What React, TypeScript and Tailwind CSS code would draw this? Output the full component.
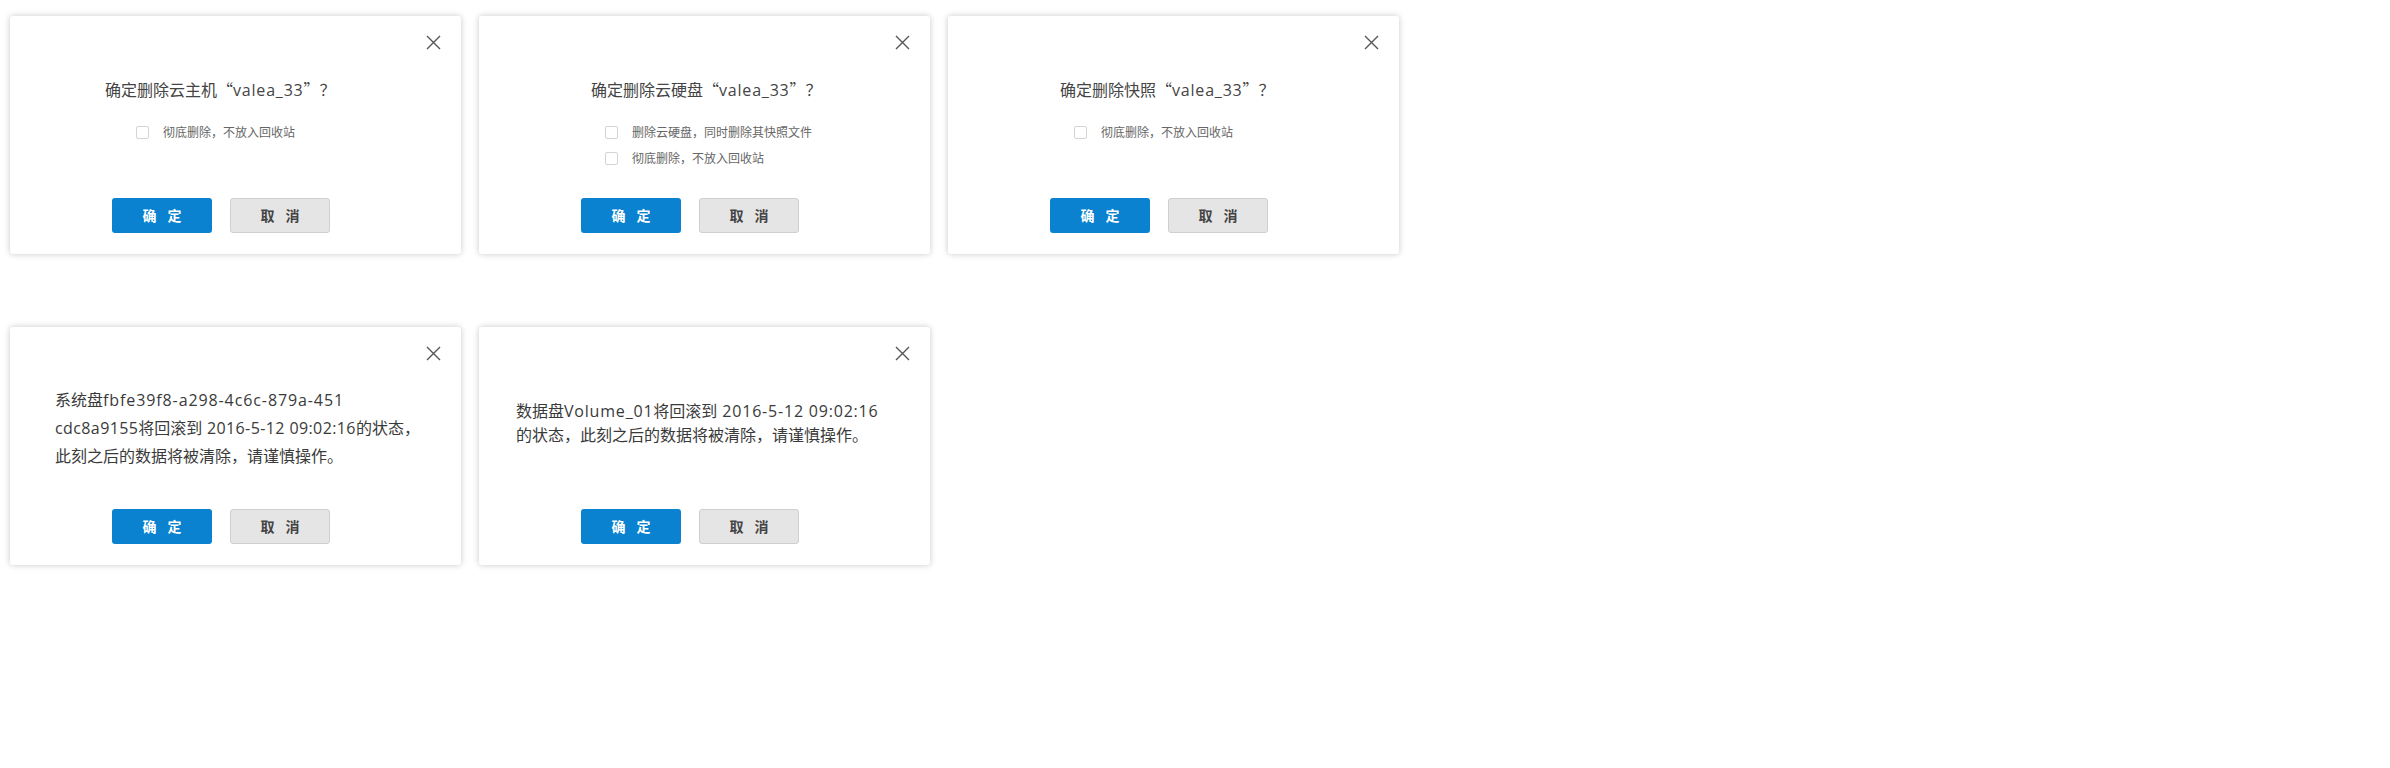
import React from 'react';

const font = "font-['Open_Sans','Noto_Sans_CJK_SC',sans-serif]";
const cjk = "font-['Noto_Sans_CJK_SC',sans-serif]";

const Comma: React.FC = () => <span className={cjk}>，</span>;

const CloseIcon: React.FC = () => (
  <svg width="15" height="15" viewBox="0 0 15 15" className="absolute top-[19px] right-[20px]">
    <path d="M1 1 L14 14 M14 1 L1 14" stroke="#555" strokeWidth="1.4" fill="none" />
  </svg>
);

const Buttons: React.FC = () => (
  <div className="absolute left-[102px] top-[182px] flex gap-[18px]">
    <button className="w-[100px] h-[35px] rounded-[3px] bg-[#0a82cf] text-white text-[14px] font-bold flex items-center justify-center gap-[11px]">
      <span>确</span>
      <span>定</span>
    </button>
    <button className="w-[100px] h-[35px] rounded-[3px] bg-[#e5e5e5] border border-[#cfcfcf] text-[#444] text-[14px] font-bold flex items-center justify-center gap-[11px]">
      <span>取</span>
      <span>消</span>
    </button>
  </div>
);

const Check: React.FC<{ label: string }> = ({ label }) => (
  <div className="flex items-center h-[26px]">
    <span className="w-[13px] h-[13px] border border-[#d4d4d4] rounded-[2px] bg-white" />
    <span className={`${cjk} ml-[14px] text-[12px] text-[#666]`}>{label}</span>
  </div>
);

const Dialog: React.FC<{ children: React.ReactNode }> = ({ children }) => (
  <div className="relative w-[451px] h-[238px] bg-white rounded-[3px] shadow-[0_0_6px_rgba(0,0,0,0.22)] shrink-0">
    <CloseIcon />
    {children}
    <Buttons />
  </div>
);

const DeleteBody: React.FC<{ subject: string; left: string; options: string[] }> = ({ subject, left, options }) => (
  <div className="pt-[61px]">
    <div className={`${left} text-[16px] leading-[24px] text-[#444]`}>
      {subject}
      <span className={cjk}>“</span>
      <span className="tracking-[0.8px]">valea_33</span>
      <span className={cjk}>”？</span>
    </div>
    <div className="pl-[126px] mt-[17px]">
      {options.map((o, i) => (
        <Check key={i} label={o} />
      ))}
    </div>
  </div>
);

export default function App() {
  return (
    <div className={`${font} w-[2390px] h-[768px] bg-white pl-[10px] pt-[16px] flex flex-col gap-[73px]`}>
      <div className="flex gap-[18px]">
        <Dialog>
          <DeleteBody subject="确定删除云主机" left="pl-[95px]" options={['彻底删除，不放入回收站']} />
        </Dialog>
        <Dialog>
          <DeleteBody
            subject="确定删除云硬盘"
            left="pl-[112px]"
            options={['删除云硬盘，同时删除其快照文件', '彻底删除，不放入回收站']}
          />
        </Dialog>
        <Dialog>
          <DeleteBody subject="确定删除快照" left="pl-[112px]" options={['彻底删除，不放入回收站']} />
        </Dialog>
      </div>
      <div className="flex gap-[18px]">
        <Dialog>
          <div className="pt-[60px] pl-[45px] text-[16px] leading-[27px] text-[#3a3a3a]">
            系统盘<span className="tracking-[0.9px]">fbfe39f8-a298-4c6c-879a-451</span>
            <br />
            <span className="tracking-[0.4px]">cdc8a9155</span>将回滚到
            <span className="tracking-[0.4px]"> 2016-5-12 09:02:16</span>的状态
            <Comma />
            <br />
            此刻之后的数据将被清除<Comma />请谨慎操作。
          </div>
        </Dialog>
        <Dialog>
          <div className="pt-[73px] pl-[37px] text-[16px] leading-[23px] text-[#3a3a3a]">
            数据盘<span className="tracking-[0.8px]">Volume_01</span>将回滚到
            <span className="tracking-[0.8px]"> 2016-5-12 09:02:16</span>
            <br />
            的状态<Comma />此刻之后的数据将被清除<Comma />请谨慎操作。
          </div>
        </Dialog>
      </div>
    </div>
  );
}
